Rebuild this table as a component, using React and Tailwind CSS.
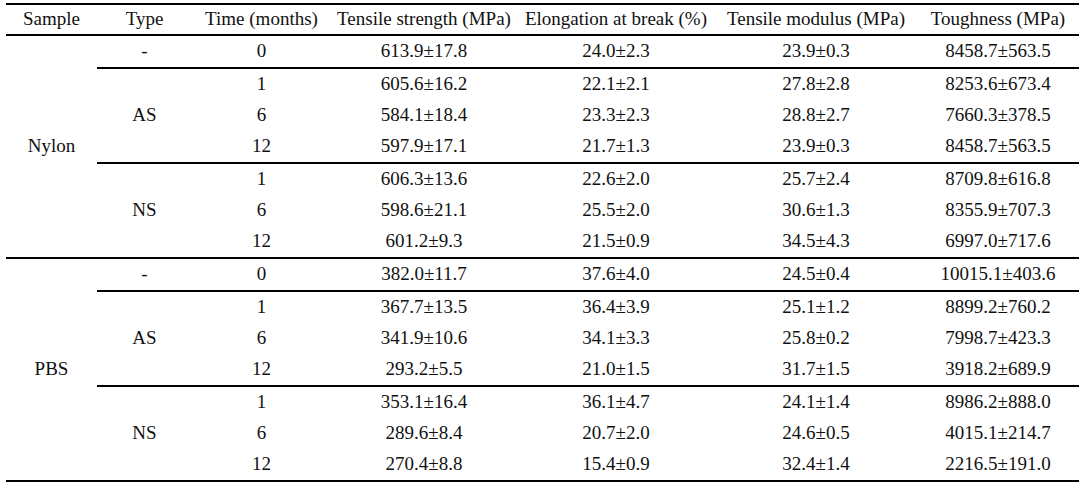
import React from 'react';

const groups = [
  {
    sample: 'Nylon',
    rows: [
      { type: '-', data: [['0', '613.9±17.8', '24.0±2.3', '23.9±0.3', '8458.7±563.5']] },
      {
        type: 'AS',
        data: [
          ['1', '605.6±16.2', '22.1±2.1', '27.8±2.8', '8253.6±673.4'],
          ['6', '584.1±18.4', '23.3±2.3', '28.8±2.7', '7660.3±378.5'],
          ['12', '597.9±17.1', '21.7±1.3', '23.9±0.3', '8458.7±563.5'],
        ],
      },
      {
        type: 'NS',
        data: [
          ['1', '606.3±13.6', '22.6±2.0', '25.7±2.4', '8709.8±616.8'],
          ['6', '598.6±21.1', '25.5±2.0', '30.6±1.3', '8355.9±707.3'],
          ['12', '601.2±9.3', '21.5±0.9', '34.5±4.3', '6997.0±717.6'],
        ],
      },
    ],
  },
  {
    sample: 'PBS',
    rows: [
      { type: '-', data: [['0', '382.0±11.7', '37.6±4.0', '24.5±0.4', '10015.1±403.6']] },
      {
        type: 'AS',
        data: [
          ['1', '367.7±13.5', '36.4±3.9', '25.1±1.2', '8899.2±760.2'],
          ['6', '341.9±10.6', '34.1±3.3', '25.8±0.2', '7998.7±423.3'],
          ['12', '293.2±5.5', '21.0±1.5', '31.7±1.5', '3918.2±689.9'],
        ],
      },
      {
        type: 'NS',
        data: [
          ['1', '353.1±16.4', '36.1±4.7', '24.1±1.4', '8986.2±888.0'],
          ['6', '289.6±8.4', '20.7±2.0', '24.6±0.5', '4015.1±214.7'],
          ['12', '270.4±8.8', '15.4±0.9', '32.4±1.4', '2216.5±191.0'],
        ],
      },
    ],
  },
];

const headers = [
  'Sample',
  'Type',
  'Time (months)',
  'Tensile strength (MPa)',
  'Elongation at break (%)',
  'Tensile modulus (MPa)',
  'Toughness (MPa)',
];

export default function App() {
  return (
    <div className="bg-white w-[1082px] h-[486px] pt-[3px] pl-[6px] text-[#111] font-['Liberation_Serif',serif] text-[19px]">
      <table className="table-fixed border-separate border-spacing-0 w-[1073px]">
        <colgroup>
          <col className="w-[91px]" />
          <col className="w-[95px]" />
          <col className="w-[139px]" />
          <col className="w-[186px]" />
          <col className="w-[198px]" />
          <col className="w-[202px]" />
          <col className="w-[162px]" />
        </colgroup>
        <thead>
          <tr className="h-[32px]">
            {headers.map((h) => (
              <th
                key={h}
                className="p-0 font-normal text-center whitespace-nowrap border-t-2 border-b-2 border-black align-middle"
              >
                {h}
              </th>
            ))}
          </tr>
        </thead>
        <tbody>
          {groups.map((g) => {
            const total = g.rows.reduce((n, r) => n + r.data.length, 0);
            let first = true;
            return g.rows.map((r) =>
              r.data.map((d, i) => {
                const last = i === r.data.length - 1;
                const cell = `p-0 text-center align-middle whitespace-nowrap ${last ? 'border-b-2 border-black' : ''}`;
                const showSample = first;
                first = false;
                return (
                  <tr key={g.sample + r.type + d[0]} className={last ? 'h-[33px]' : 'h-[31px]'}>
                    {showSample && (
                      <td rowSpan={total} className="p-0 text-center align-middle border-b-2 border-black">
                        {g.sample}
                      </td>
                    )}
                    {i === 0 && (
                      <td rowSpan={r.data.length} className="p-0 text-center align-middle border-b-2 border-black">
                        {r.type}
                      </td>
                    )}
                    {d.map((v, j) => (
                      <td key={j} className={cell}>
                        {v}
                      </td>
                    ))}
                  </tr>
                );
              })
            );
          })}
        </tbody>
      </table>
    </div>
  );
}
